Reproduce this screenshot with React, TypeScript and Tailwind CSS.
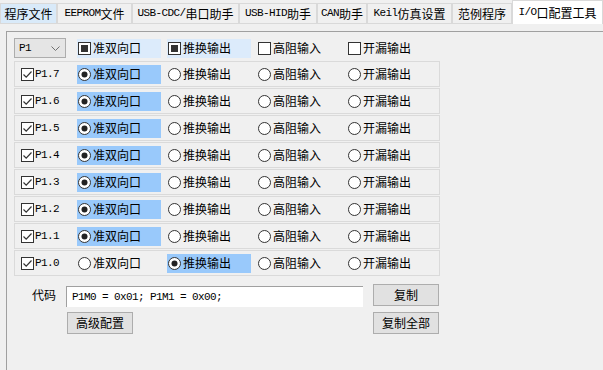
import { Fragment } from "react";

const mono = "font-['Liberation_Mono',monospace] text-[11px] tracking-[-0.6px]";

// ascii runs get the narrow mono face, the rest stays on the CJK face
const Txt = ({ text }: { text: string }) => {
  const parts = text.split(/([\x20-\x7e]+)/).filter((p) => p !== "");
  return (
    <Fragment>
      {parts.map((p, i) =>
        /^[\x20-\x7e]+$/.test(p) ? (
          <span key={i} className={mono + " whitespace-pre"}>
            {p}
          </span>
        ) : (
          <span key={i}>{p}</span>
        )
      )}
    </Fragment>
  );
};

const tabs = [
  { label: "程序文件", w: "w-[57px]", kind: "hover" },
  { label: "EEPROM文件", w: "w-[75px]", kind: "" },
  { label: "USB-CDC/串口助手", w: "w-[107px]", kind: "" },
  { label: "USB-HID助手", w: "w-[78px]", kind: "" },
  { label: "CAN助手", w: "w-[50px]", kind: "" },
  { label: "Keil仿真设置", w: "w-[85px]", kind: "" },
  { label: "范例程序", w: "w-[60px]", kind: "" },
  { label: "I/O口配置工具", w: "w-[91px]", kind: "active" },
];

const modes = ["准双向口", "推换输出", "高阻输入", "开漏输出"];

const pins = [
  { name: "P1.7", sel: 0 },
  { name: "P1.6", sel: 0 },
  { name: "P1.5", sel: 0 },
  { name: "P1.4", sel: 0 },
  { name: "P1.3", sel: 0 },
  { name: "P1.2", sel: 0 },
  { name: "P1.1", sel: 0 },
  { name: "P1.0", sel: 1 },
];

const CheckBox = ({ state }: { state: "on" | "off" | "mixed" }) => (
  <svg width="13" height="13" viewBox="0 0 13 13" className="shrink-0">
    <rect x="0.5" y="0.5" width="12" height="12" fill="#fff" stroke="#333" />
    {state === "on" && (
      <path d="M2.5 6.5 L5.2 9.2 L10.5 3.5" fill="none" stroke="#333" strokeWidth="1.2" />
    )}
    {state === "mixed" && <rect x="3" y="3" width="7" height="7" fill="#333" />}
  </svg>
);

const Radio = ({ on }: { on: boolean }) => (
  <svg width="13" height="13" viewBox="0 0 13 13" className="shrink-0">
    <circle cx="6.5" cy="6.5" r="6" fill="#fff" stroke="#333" />
    {on && <circle cx="6.5" cy="6.5" r="3" fill="#222" />}
  </svg>
);

const Button = ({ label }: { label: string }) => (
  <div className="w-[66px] h-[22px] bg-[#e1e1e1] border border-[#adadad] flex items-center justify-center text-[12px]">
    {label}
  </div>
);

export default function App() {
  return (
    <div className="w-[603px] h-[370px] bg-[#f0f0f0] overflow-hidden text-[12px] text-black font-['Noto_Sans_CJK_SC',sans-serif] leading-none">
      {/* tab strip */}
      <div className="flex items-end h-[24px]">
        {tabs.map((t) => (
          <div
            key={t.label}
            className={
              t.w +
              " flex items-center justify-center border border-[#d9d9d9] " +
              (t.kind === "active"
                ? "h-[24px] bg-white border-b-0"
                : t.kind === "hover"
                ? "h-[21px] bg-[#d9eaf9]"
                : "h-[21px] bg-[#f0f0f0]")
            }
          >
            <Txt text={t.label} />
          </div>
        ))}
      </div>

      <div className="h-[7px]" />

      {/* tab page */}
      <div className="ml-[6px] h-[339px] border-t border-l border-[#a0a0a0] pl-[7px] pt-[5px]">
        {/* header row */}
        <div className="flex items-center h-[22px]">
          <div className="w-[52px] h-[20px] bg-[#e5e5e5] border border-[#adadad] flex items-center justify-between pl-[4px] pr-[5px]">
            <span className={mono}>P1</span>
            <svg width="9" height="5" viewBox="0 0 9 5">
              <path d="M0.5 0.5 L4.5 4.5 L8.5 0.5" fill="none" stroke="#707070" />
            </svg>
          </div>
          <div className="ml-[11px] flex gap-[6px]">
            {modes.map((m, i) => (
              <div
                key={m}
                className={
                  "w-[84px] h-[19px] flex items-center gap-[2px] pl-[1px] " +
                  (i < 2 ? "bg-[#dcebfb]" : "")
                }
              >
                <CheckBox state={i < 2 ? "mixed" : "off"} />
                <span>{m}</span>
              </div>
            ))}
          </div>
        </div>

        {/* pin rows */}
        <div className="mt-[2px] flex flex-col gap-[1px]">
          {pins.map((p) => (
            <div
              key={p.name}
              className="w-[426px] h-[26px] border border-[#dadada] flex items-center pl-[6px]"
            >
              <CheckBox state="on" />
              <span className={mono + " ml-[1px] w-[42px]"}>{p.name}</span>
              <div className="flex gap-[6px]">
                {modes.map((m, i) => (
                  <div
                    key={m}
                    className={
                      "w-[84px] h-[19px] flex items-center gap-[2px] pl-[1px] " +
                      (i === p.sel ? "bg-[#99c9fb]" : "")
                    }
                  >
                    <Radio on={i === p.sel} />
                    <span>{m}</span>
                  </div>
                ))}
              </div>
            </div>
          ))}
        </div>

        {/* code line */}
        <div className="mt-[8px] flex items-start pl-[18px]">
          <span className="mt-[5px] w-[26px]">代码</span>
          <div className="ml-[8px] mt-[2px] w-[297px] h-[21px] bg-white border-t border-l border-[#a0a0a0] flex items-center pl-[5px]">
            <span className={mono + " whitespace-pre"}>P1M0 = 0x01; P1M1 = 0x00;</span>
          </div>
          <div className="ml-[10px]">
            <Button label="复制" />
          </div>
        </div>

        <div className="mt-[5px] flex pl-[53px] gap-[240px]">
          <Button label="高级配置" />
          <Button label="复制全部" />
        </div>
      </div>
    </div>
  );
}
